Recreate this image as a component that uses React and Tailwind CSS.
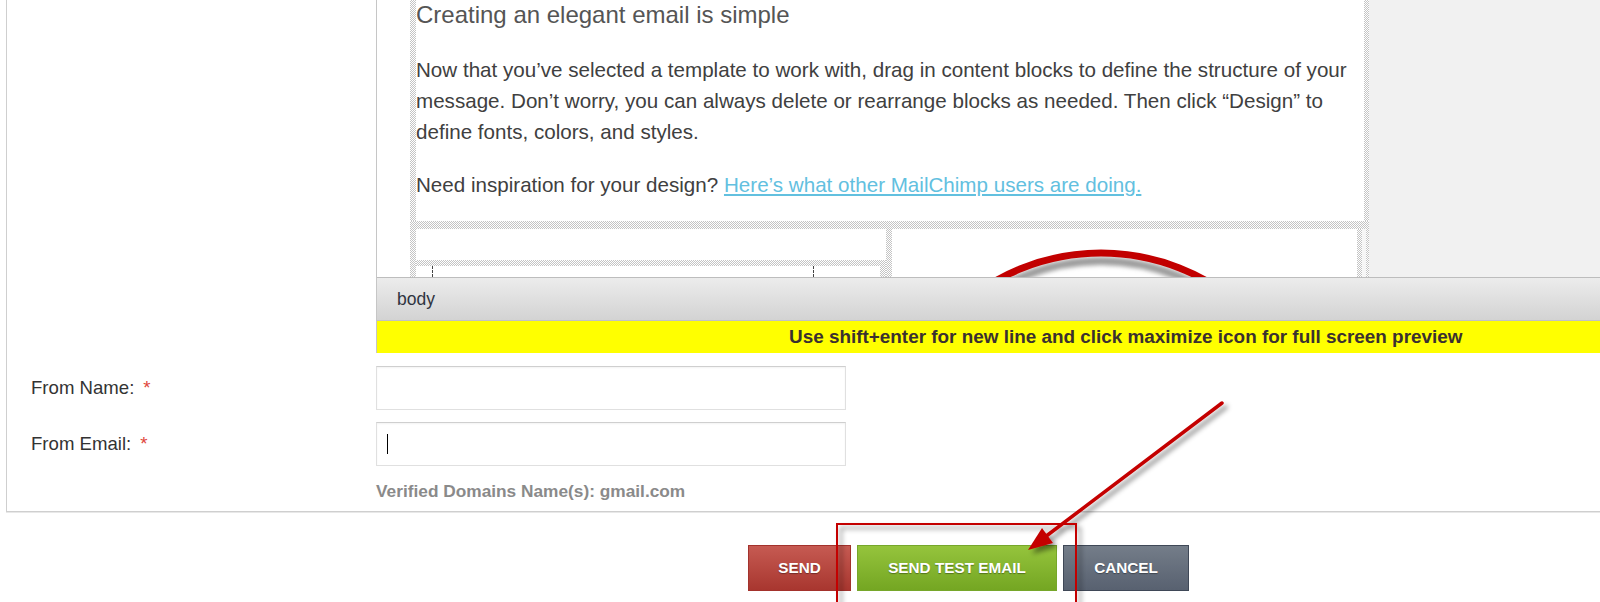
const dots = "bg-[image:repeating-conic-gradient(#c4c4c4_0_25%,#ffffff_0_50%)] bg-[length:2px_2px]";

function Editor() {
  return (
    <div className="border-l border-[#c6c6c6]">
      <div className="flex h-[277px]">
        <div className="flex w-[992px] shrink-0 flex-col bg-white pl-[33px]">
          {/* intro block */}
          <div className="flex h-[221px]">
            <div className={`w-[6px] ${dots}`} />
            <div className="flex-1 whitespace-nowrap pt-px">
              <h1 className="text-[24px] leading-[28px] text-[#555]">Creating an elegant email is simple</h1>
              <p className="mt-[25px] text-[20.6px] leading-[31px] text-[#404040]">
                Now that you’ve selected a template to work with, drag in content blocks to define the structure of your
                <br />
                message. Don’t worry, you can always delete or rearrange blocks as needed. Then click “Design” to
                <br />
                define fonts, colors, and styles.
              </p>
              <p className="mt-[22px] text-[20.6px] leading-[31px] text-[#404040]">
                Need inspiration for your design?{" "}
                <a className="text-[#62c0df] underline">Here’s what other MailChimp users are doing.</a>
              </p>
            </div>
            <div className={`w-[5px] ${dots}`} />
          </div>
          <div className={`h-[8px] ${dots}`} />
          {/* two column row */}
          <div className="flex h-[48px]">
            <div className={`w-[6px] ${dots}`} />
            <div className="flex w-[470px] flex-col">
              <div className="h-[31px]" />
              <div className="flex flex-1">
                <div className="flex flex-1 flex-col">
                  <div className={`h-[6px] ${dots}`} />
                  <div className="relative flex-1">
                    <span className="absolute left-[16px] top-0 h-full border-l border-dashed border-[#444]" />
                    <span className="absolute left-[397px] top-0 h-full border-l border-dashed border-[#444]" />
                  </div>
                </div>
                <div className={`w-[6px] ${dots}`} />
              </div>
            </div>
            <div className={`w-[6px] ${dots}`} />
            <div className="w-[465px] overflow-hidden bg-white">
              <svg width="465" height="48" viewBox="0 0 465 48">
                <defs>
                  <filter id="sh" x="-10%" y="-10%" width="120%" height="120%">
                    <feGaussianBlur stdDeviation="2" />
                  </filter>
                </defs>
                <circle cx="209" cy="237" r="205" fill="none" stroke="#9c9c9c" strokeWidth="8" filter="url(#sh)" />
                <circle cx="209" cy="237" r="213" fill="none" stroke="#c20000" strokeWidth="7" />
              </svg>
            </div>
            <div className={`w-[5px] ${dots}`} />
            <div className="w-[4px] bg-[#f6f6f6]" />
            <div className={`w-[3px] ${dots}`} />
          </div>
        </div>
        <div className="flex-1 bg-[#f1f1f1]" />
      </div>
      <div className="flex h-[44px] items-center border-y border-t-[#bdbdbd] border-b-[#c2c2c2] bg-gradient-to-b from-[#ececec] to-[#d3d3d3] pl-[20px]">
        <span className="text-[17.5px] text-[#2f3440]">body</span>
      </div>
      <div className="flex h-[32px] items-center bg-[#ffff00] pl-[412px]">
        <span className="whitespace-nowrap text-[18.9px] font-bold text-[#3a3030]">
          Use shift+enter for new line and click maximize icon for full screen preview
        </span>
      </div>
    </div>
  );
}

function Field({ label, caret }) {
  return (
    <div className="grid grid-cols-[369px_1fr] items-center">
      <div className="pl-[24px] text-[18.6px] text-[#333]">
        {label}
        <span className="ml-[9px] text-[#e0463c]">*</span>
      </div>
      <div className="flex h-[44px] w-[470px] items-center border border-[#e0e0e0] border-t-[#cfcfcf] bg-white pl-[10px] shadow-[inset_0_1px_2px_rgba(0,0,0,0.05)]">
        {caret && <span className="h-[20px] w-px bg-black" />}
      </div>
    </div>
  );
}

function Button({ children, className }) {
  return (
    <button
      className={`h-[46px] border text-[15.3px] font-bold uppercase text-white [text-shadow:0_1px_1px_rgba(0,0,0,0.35)] ${className}`}
    >
      {children}
    </button>
  );
}

export default function App() {
  return (
    <div className="relative h-[602px] w-[1600px] overflow-hidden bg-white font-['Liberation_Sans',Arial,sans-serif]">
      <div className="ml-[6px] border-b border-l border-[#cfcfcf] pb-[10px] shadow-[0_1px_0_#e8e8e8]">
        <div className="grid grid-cols-[369px_1fr]">
          <div />
          <Editor />
        </div>
        <div className="mt-[13px] flex flex-col gap-[12px]">
          <Field label="From Name:" />
          <Field label="From Email:" caret />
        </div>
        <div className="mt-[15px] grid grid-cols-[369px_1fr]">
          <div />
          <div className="text-[17.3px] font-bold leading-[20px] text-[#8a8a8a]">Verified Domains Name(s): gmail.com</div>
        </div>
      </div>

      <div className="mt-[33px] flex gap-[6px] pl-[748px]">
        <Button className="w-[103px] border-[#a3322c] bg-gradient-to-b from-[#c65a52] to-[#a8362f]">Send</Button>
        <Button className="w-[200px] border-[#76a72a] bg-gradient-to-b from-[#95c43c] to-[#74a622]">Send Test Email</Button>
        <Button className="w-[126px] border-[#3f4857] bg-gradient-to-b from-[#747d89] to-[#586170]">Cancel</Button>
      </div>

      {/* annotation overlay */}
      <svg className="pointer-events-none absolute inset-0" width="1600" height="602" viewBox="0 0 1600 602">
        <defs>
          <filter id="drop" x="-20%" y="-20%" width="140%" height="140%">
            <feDropShadow dx="4" dy="4" stdDeviation="2.5" floodColor="#000" floodOpacity="0.45" />
          </filter>
        </defs>
        <g filter="url(#drop)">
          <rect x="837" y="524" width="239" height="100" fill="none" stroke="#c40000" strokeWidth="2" />
          <line x1="1222" y1="403" x2="1045" y2="537" stroke="#c40000" strokeWidth="3.5" strokeLinecap="round" />
          <polygon points="1028,550 1042,528 1053,543" fill="#c40000" />
        </g>
      </svg>
    </div>
  );
}
